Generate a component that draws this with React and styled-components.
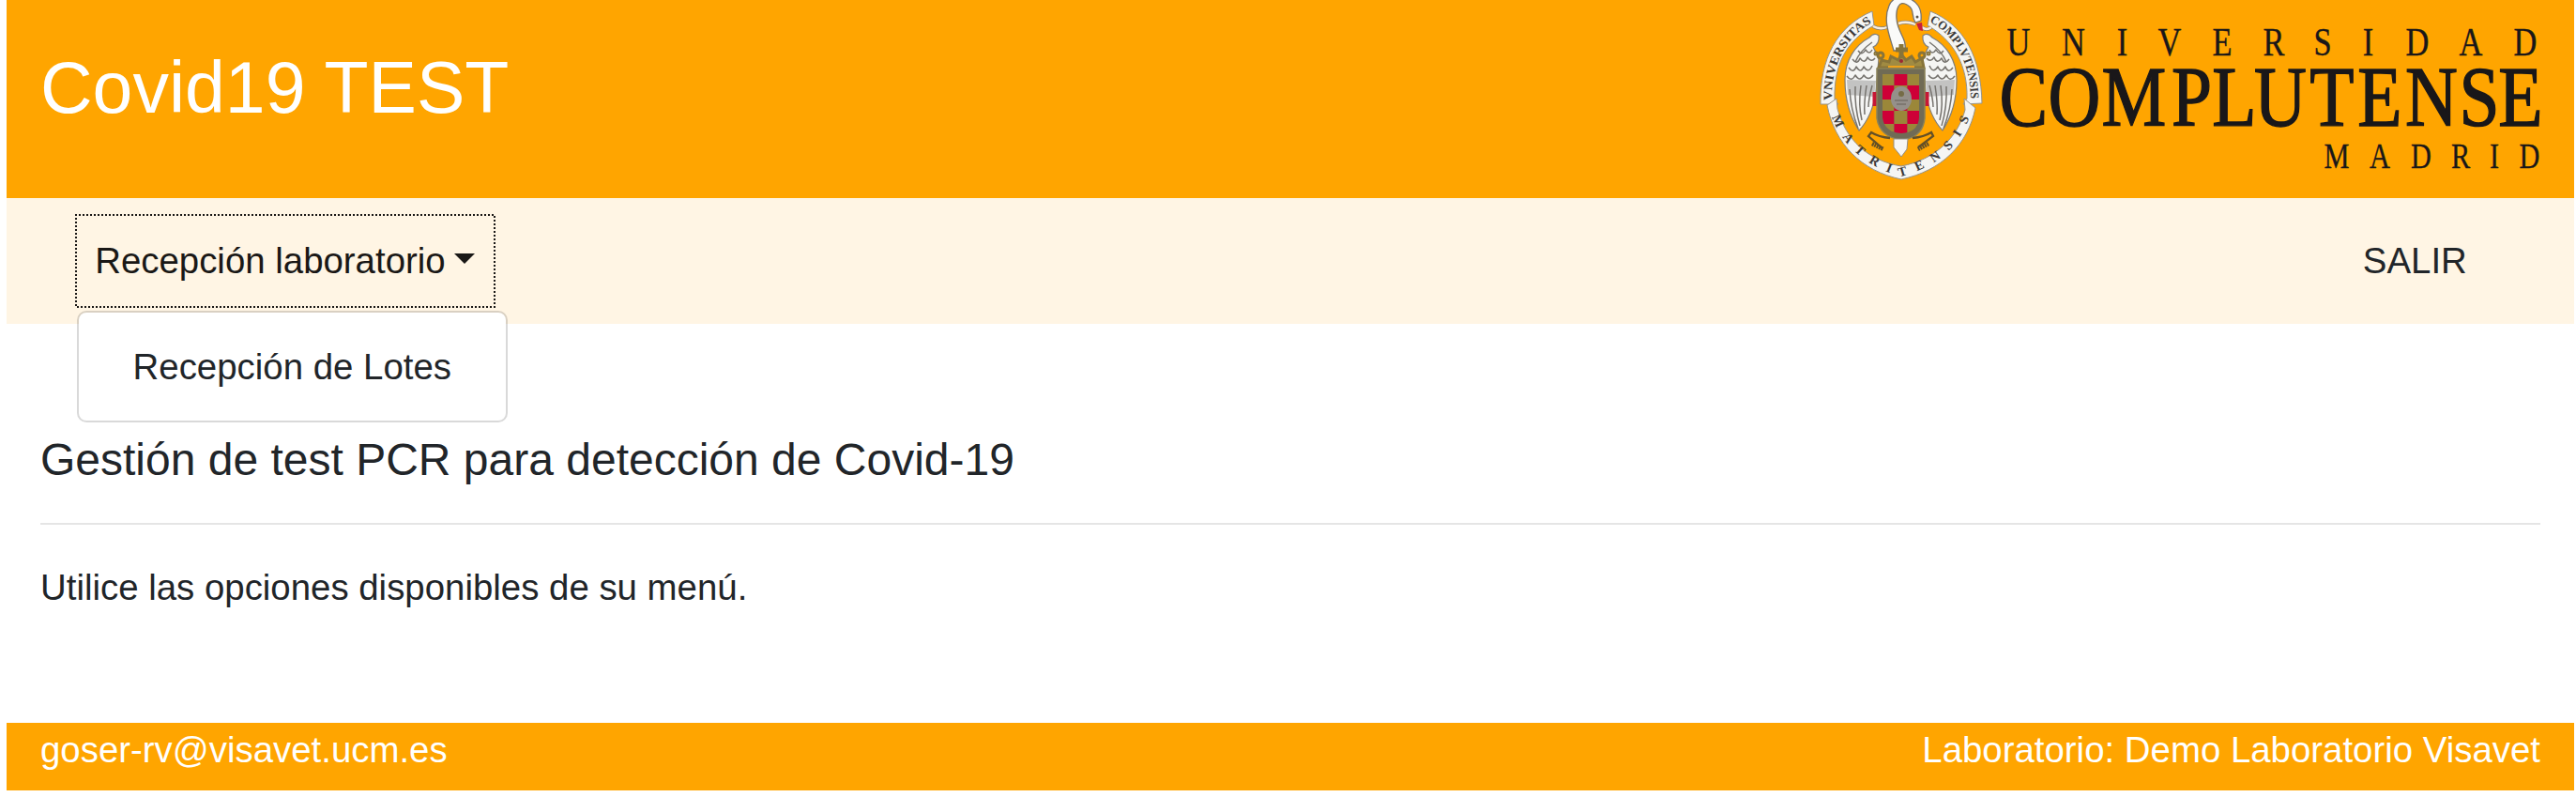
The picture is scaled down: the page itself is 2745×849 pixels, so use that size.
import React from "react";
import styled, { createGlobalStyle, css } from "styled-components";

const GlobalStyle = createGlobalStyle`
  * { box-sizing: border-box; }
  body {
    margin: 0;
    background: #fff;
    color: #212529;
    font: 400 38.4px/57.6px "Liberation Sans", Arial, sans-serif;
  }
`;

const Page = styled.div`
  margin: 0 2px 0 7px;
  height: 849px;
  display: flex;
  flex-direction: column;
`;
const Header = styled.header`
  height: 211px;
  padding: 0 36px;
  display: flex;
  justify-content: space-between;
  background: orange;
`;
const Title = styled.h1`
  margin: 47px 0 0;
  font-size: 77px;
  line-height: 92px;
  font-weight: 400;
  color: #fff;
`;
const LogoSvg = styled.svg`
  display: block;
  width: 775px;
  height: 200px;
  overflow: visible;
`;
const Navbar = styled.nav`
  height: 134px;
  padding: 19px 95px 0 75px;
  display: flex;
  justify-content: space-between;
  align-items: flex-start;
  background: #fff5e4;
`;
const NavItem = styled.div`
  position: relative;
`;
/* Square-dotted focus ring, drawn 2px outside the link. */
const focusRing = css`
  &::after {
    content: "";
    position: absolute;
    inset: -2px;
    pointer-events: none;
    --h: repeating-linear-gradient(90deg, #1a1816 0 2px, transparent 2px 4px);
    --v: repeating-linear-gradient(180deg, #1a1816 0 2px, transparent 2px 4px);
    background: var(--h) 0 0 / 100% 2px no-repeat,
      var(--h) 2px 100% / 100% 2px no-repeat,
      var(--v) 0 0 / 2px 100% no-repeat,
      var(--v) 100% 2px / 2px 100% no-repeat;
  }
`;
const NavLink = styled.a`
  position: relative;
  display: flex;
  align-items: center;
  height: 96px;
  padding: 0 19.2px;
  color: ${(p) => (p.$open ? "#1a1816" : "#212529")};
  ${(p) => p.$open && focusRing}
`;
const Caret = styled.span`
  margin: -5px 1px 0 9px;
  border: solid transparent;
  border-width: 11px 11px 0;
  border-top-color: #1a1816;
`;
const Menu = styled.div`
  position: absolute;
  z-index: 2;
  top: 101px;
  left: 0;
  width: 459px;
  height: 119px;
  padding: 29px 57.6px;
  white-space: nowrap;
  background: #fff;
  background-clip: padding-box;
  border: 2px solid rgba(0, 0, 0, 0.15);
  border-radius: 10px;
`;
const Content = styled.main`
  height: 425px;
  padding: 116px 36px 0;
`;
const Heading = styled.h4`
  margin: 0;
  font-size: 48px;
  line-height: 58px;
  font-weight: 400;
`;
const Rule = styled.hr`
  margin: 38px 0;
  border: 0;
  border-top: 2px solid #e5e5e5;
`;
const Paragraph = styled.p`
  margin: 0;
`;
const Footer = styled.footer`
  height: 72px;
  padding: 0 36px;
  display: flex;
  justify-content: space-between;
  background: orange;
  color: #fff;
`;

function Wing() {
  return (
    <g strokeLinejoin="round">
      <path d="M82 38 Q77 34 72 40 C57 48 46 64 46 85 Q46 116 61 139 Q75 124 79 98 L82 62 L76 50 Q83 47 82 38Z" fill="#f5f5f3" stroke="#817f79" strokeWidth="1.2" />
      <path d="M48 85 L79 86 L77 103 L49 101Z" fill="#999" opacity=".55" />
      <g fill="none" stroke="#77746f" strokeWidth="1.5">
        <path d="M50 72q5 7 8-1q5 8 8 0q5 8 9-1M54 63q5 7 8-1q5 7 8-1q4 6 8 1M48 81q5 7 9-1q5 8 9 0q5 7 10 0M60 54q4 6 8-1q4 6 7 0M57 66q5-12 18-21" />
        <path d="M51 95Q52 116 60 137M57 92Q56 114 62 134M63 91Q60 112 64 128M69 91Q66 110 67 122M75 91Q71 106 71 114" />
      </g>
    </g>
  );
}

const checkColumns = [[2006, 12.5], [2018.5, 14], [2032.5, 12.5]];
const checkRows = [[79, 12], [91, 15], [106, 12], [118, 14], [132, 11]];

const complutense = [
  ["C", 2156.2], ["O", 2210.5], ["M", 2274], ["P", 2335.5], ["L", 2381], ["U", 2430],
  ["T", 2485], ["E", 2536], ["N", 2591], ["S", 2642], ["E", 2686],
];
const universidad = [2151, 2209.5, 2261.5, 2312, 2368, 2423, 2475, 2523.5, 2576, 2633, 2691];
const madrid = [2490, 2536, 2580, 2622, 2658, 2695.5];

/* Each letter is centred on its own x; sx condenses the glyphs. */
function SpacedWord({ letters, xs, y, size, sx, weight }) {
  return (
    <text transform={`scale(${sx} 1)`} y={y} fontSize={size} textAnchor="middle" stroke="#191719" strokeWidth={weight}>
      {letters.map((c, i) => <tspan key={i} x={xs[i] / sx}>{c}</tspan>)}
    </text>
  );
}

function Logo() {
  return (
    <LogoSvg viewBox="1932 0 775 200" role="img" aria-label="Universidad Complutense Madrid">
      <defs>
        <path id="ringLeft" d="M1952 107 C1951 69 1967 39 1997 23" />
        <path id="ringRight" d="M2056 23 C2085 39 2100 69 2100 108" />
        <path id="ringBase" d="M1950 119 C1962 156 1990 178 2026 188 C2062 178 2089 158 2101 118" />
        <clipPath id="shield"><path d="M2006 79H2045V125Q2044 141 2026 142Q2008 141 2006 125Z" /></clipPath>
      </defs>
      <g fill="#f5f5f3" stroke="#96948c" strokeWidth="1">
        <path d="M1995 12 L1997 27 C1968 43 1954 68 1955 106 L1959 111 L1940 111 C1939 63 1957 28 1995 12Z" />
        <path d="M2057 12 L2054 27 C2082 43 2097 70 2096 105 L2092 111 L2112 110 C2111 62 2094 27 2057 12Z" />
        <path d="M1957 105 L1958 116 C1967 149 1990 171 2026 177 C2062 170 2086 147 2094 117 L2093 105 L2105 115 C2097 154 2069 182 2026 191 C1983 182 1955 153 1947 112Z" />
      </g>
      <g fontFamily="Liberation Serif, serif" fill="#3b3937" fontWeight="700">
        <text fontSize="13"><textPath href="#ringLeft" textLength="98" lengthAdjust="spacingAndGlyphs">VNIVERSITAS</textPath></text>
        <text fontSize="13"><textPath href="#ringRight" textLength="98" lengthAdjust="spacingAndGlyphs">COMPLVTENSIS</textPath></text>
        <text fontSize="14"><textPath href="#ringBase" startOffset="6" textLength="201">MATRITENSIS</textPath></text>
      </g>
      <path d="M1996 28 Q2003 32 2011 29 M2023 25 Q2032 22 2041 26 M2048 29 Q2053 33 2058 29" fill="none" stroke="#8d8373" strokeWidth="4" />
      <path d="M1996 28 Q2003 32 2011 29 M2023 25 Q2032 22 2041 26 M2048 29 Q2053 33 2058 29" fill="none" stroke="#f8eee0" strokeWidth="2.4" />
      <g transform="translate(1920 0)"><Wing /></g>
      <g transform="translate(4051 0) scale(-1 1)"><g transform="translate(1920 0)"><Wing /></g></g>
      <path d="M2018 54 C2014 39 2006 22 2013 6 C2019 -8 2037 -4 2044 6 Q2048 12 2047 22 L2041 24 C2036 16 2041 10 2032 5 C2024 0 2020 9 2021 20 C2022 35 2032 40 2030 54Z" fill="#fafaf9" stroke="#77746e" strokeWidth="1.3" />
      <path d="M2042 25 L2048 24 L2049 33 L2045 32Z" fill="#c91f3c" />
      <circle cx="2043" cy="18" r="1.5" fill="#5d5649" />
      <g fill="none" stroke="#87743a" strokeWidth="3">
        <path d="M2002 72 L2005 64 L2013 66 L2015 60 L2023 64 L2026 58 L2031 64 L2037 60 L2041 66 L2048 62 L2050 72Z" fill="#a08b42" />
        <path d="M2026 47V62M2020 53H2033" strokeWidth="5" />
        <circle cx="2004" cy="59" r="3" /><circle cx="2048" cy="59" r="3" />
        <circle cx="1999" cy="57" r="1" /><circle cx="2055" cy="57" r="1" />
      </g>
      <path d="M2012 71H2040" stroke="#f0a21a" strokeWidth="2" />
      <circle cx="2026" cy="65" r="2" fill="#9c2733" />
      <path d="M1998 98V113M2053 98V113" stroke="#c71735" strokeWidth="5" />
      <path d="M2000 73H2051V126Q2049 147 2026 149Q2003 146 2000 126Z" fill="#706b55" stroke="#8b8358" strokeWidth="1.5" />
      <g clipPath="url(#shield)">
        {checkRows.map(([y, h], row) => checkColumns.map(([x, w], col) => (
          <rect key={`${row}-${col}`} x={x} y={y} width={w} height={h} fill={(row + col) % 2 ? "#ce0037" : "#9b8739"} />
        )))}
      </g>
      <ellipse cx="2026" cy="105" rx="11" ry="13" fill="#95908a" />
      <circle cx="2026" cy="100" r="3" fill="#756c46" />
      <path d="M2019 107H2033M2021 111H2031" stroke="#777069" strokeWidth="1.5" />
      <path d="M2018 148L2033 148L2032 159L2026 167L2018 157Z" fill="#f7f6f3" stroke="#938e84" />
      <g fill="none" stroke="#635027" strokeWidth="2.3">
        <path d="M2014 147Q2002 146 1994 141L1991 145L2006 158M2038 147Q2050 146 2058 141L2060 145L2044 157" />
        <path d="M1995 153L2007 159M2055 153L2044 159" strokeWidth="4.5" strokeDasharray="2 .7" />
      </g>
      <g fontFamily="Liberation Serif, serif" fill="#191719">
        <SpacedWord letters={Array.from("UNIVERSIDAD")} xs={universidad} y={59.5} size={43} sx={0.8} weight={0.4} />
        <SpacedWord letters={complutense.map((l) => l[0])} xs={complutense.map((l) => l[1])} y={134} size={90} sx={0.86} weight={1.4} />
        <SpacedWord letters={Array.from("MADRID")} xs={madrid} y={179} size={37} sx={0.82} weight={0.3} />
      </g>
    </LogoSvg>
  );
}

export default function App() {
  return (
    <>
      <GlobalStyle />
      <Page>
        <Header>
          <Title>Covid19 TEST</Title>
          <Logo />
        </Header>
        <Navbar>
          <NavItem>
            <NavLink $open>Recepción laboratorio<Caret /></NavLink>
            <Menu>Recepción de Lotes</Menu>
          </NavItem>
          <NavItem><NavLink>SALIR</NavLink></NavItem>
        </Navbar>
        <Content>
          <Heading>Gestión de test PCR para detección de Covid-19</Heading>
          <Rule />
          <Paragraph>Utilice las opciones disponibles de su menú.</Paragraph>
        </Content>
        <Footer>
          <span>goser-rv@visavet.ucm.es</span>
          <span>Laboratorio: Demo Laboratorio Visavet</span>
        </Footer>
      </Page>
    </>
  );
}
